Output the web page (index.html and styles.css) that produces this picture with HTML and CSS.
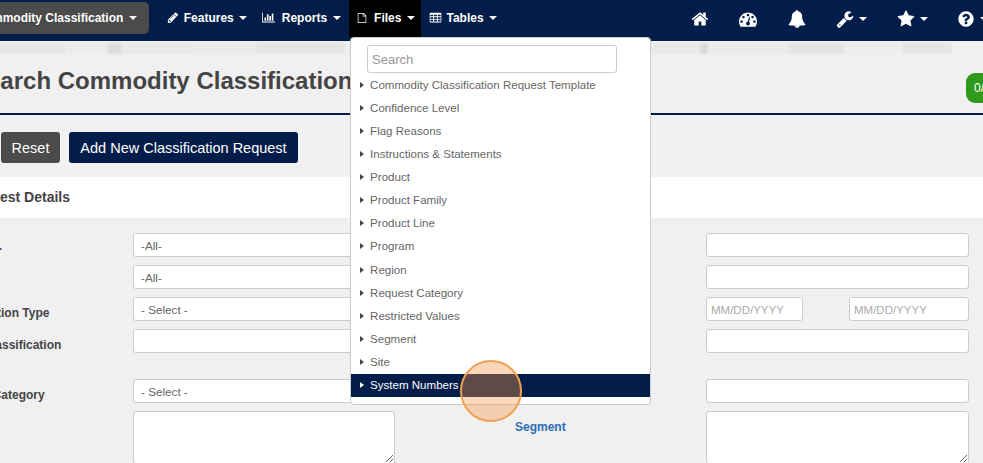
FILE: index.html
```html
<!DOCTYPE html>
<html lang="en">
<head>
<meta charset="utf-8">
<title>Search Commodity Classification</title>
<link rel="stylesheet" href="styles.css">
</head>
<body>
<div class="page">
  <nav class="nav">
    <a class="brand">Commodity Classification <i class="caret"></i></a>
    <a class="item item-features"><svg class="ico i12" viewBox="0 0 1792 1792"><path d="M491 1536l91-91-235-235-91 91v107h128v128h107zm523-928q0-22-22-22-10 0-17 7l-542 542q-7 7-7 17 0 22 22 22 10 0 17-7l542-542q7-7 7-17zm-54-192l416 416-832 832h-416v-416zm683 96q0 53-37 90l-166 166-416-416 166-165q36-38 90-38 53 0 91 38l235 234q37 39 37 91z"/></svg>Features<i class="caret"></i></a>
    <a class="item item-reports"><svg class="ico i13" viewBox="0 0 2048 1792"><path d="M640 896v512h-256v-512h256zm384-512v1024h-256v-1024h256zm1024 1152v128h-2048v-1536h128v1408h1920zm-640-896v768h-256v-768h256zm384-384v1152h-256v-1152h256z"/></svg>Reports<i class="caret"></i></a>
    <div class="item item-open">
      <svg class="ico i10" viewBox="0 0 1792 1792"><path d="M1596 380q28 28 48 76t20 88v1152q0 40-28 68t-68 28h-1344q-40 0-68-28t-28-68v-1600q0-40 28-68t68-28h896q40 0 88 20t76 48zm-444-244v376h376q-10-29-22-41l-313-313q-12-12-41-22zm384 1528v-1024h-416q-40 0-68-28t-28-68v-416h-768v1536h1280z"/></svg>Files<i class="caret"></i>
      <div class="menu">
        <input class="menu-search" placeholder="Search">
        <ul class="menu-list">
          <li>Commodity Classification Request Template</li>
          <li>Confidence Level</li>
          <li>Flag Reasons</li>
          <li>Instructions &amp; Statements</li>
          <li>Product</li>
          <li>Product Family</li>
          <li>Product Line</li>
          <li>Program</li>
          <li>Region</li>
          <li>Request Category</li>
          <li>Restricted Values</li>
          <li>Segment</li>
          <li>Site</li>
          <li class="active">System Numbers</li>
        </ul>
      </div>
    </div>
    <a class="item item-tables"><svg class="ico i13" viewBox="0 0 1792 1792"><path fill-rule="evenodd" d="M160 224h1472q64 0 64 64v1216q0 64-64 64H160q-64 0-64-64V288q0-64 64-64zm32 288v224h384V512zm512 0v224h384V512zm512 0v224h384V512zM192 864v224h384V864zm512 0v224h384V864zm512 0v224h384V864zM192 1216v224h384v-224zm512 0v224h384v-224zm512 0v224h384v-224z"/></svg>Tables<i class="caret"></i></a>
    <div class="nav-right">
      <svg class="nico n-home" viewBox="0 0 1792 1792"><path d="M1472 992v480q0 26-19 45t-45 19h-384v-384h-256v384h-384q-26 0-45-19t-19-45v-480q0-1 .5-3t.5-3l575-474 575 474q1 2 1 6zm223-69l-62 74q-8 9-21 11h-3q-13 0-21-7l-692-577-692 577q-12 8-24 7-13-2-21-11l-62-74q-8-10-7-23.5t11-21.5l719-599q32-26 76-26t76 26l244 204v-195q0-14 9-23t23-9h192q14 0 23 9t9 23v408l219 182q10 8 11 21.5t-7 23.5z"/></svg>
      <svg class="nico n-gauge" viewBox="0 0 1792 1792"><path d="M384 1152q0-53-37.5-90.5t-90.5-37.5-90.5 37.5-37.5 90.5 37.5 90.5 90.5 37.5 90.5-37.5 37.5-90.5zm192-448q0-53-37.5-90.5t-90.5-37.5-90.5 37.5-37.5 90.5 37.5 90.5 90.5 37.5 90.5-37.5 37.5-90.5zm428 481l101-382q6-26-7.5-48.5t-38.5-29.5-48 6.5-30 39.5l-101 382q-60 5-107 43.5t-63 98.5q-20 77 20 146t117 89 146-20 89-117q16-60-6-117t-72-91zm660-33q0-53-37.5-90.5t-90.5-37.5-90.5 37.5-37.5 90.5 37.5 90.5 90.5 37.5 90.5-37.5 37.5-90.5zm-640-640q0-53-37.5-90.5t-90.5-37.5-90.5 37.5-37.5 90.5 37.5 90.5 90.5 37.5 90.5-37.5 37.5-90.5zm448 192q0-53-37.5-90.5t-90.5-37.5-90.5 37.5-37.5 90.5 37.5 90.5 90.5 37.5 90.5-37.5 37.5-90.5zm320 448q0 261-141 483-19 29-54 29h-1402q-35 0-54-29-141-221-141-483 0-182 71-348t191-286 286-191 348-71 348 71 286 191 191 286 71 348z"/></svg>
      <svg class="nico n-bell" viewBox="0 0 1792 1792"><path d="M912 1696q0-16-16-16-59 0-101.5-42.5t-42.5-101.5q0-16-16-16t-16 16q0 73 51.5 124.5t124.5 51.5q16 0 16-16zm816-288q0 52-38 90t-90 38h-448q0 106-75 181t-181 75-181-75-75-181h-448q-52 0-90-38t-38-90q50-42 91-88t85-119.5 74.5-158.5 50-206 19.5-260q0-152 117-282.5t307-158.5q-8-19-8-39 0-40 28-68t68-28 68 28 28 68q0 20-8 39 190 28 307 158.5t117 282.5q0 139 19.5 260t50 206 74.5 158.5 85 119.5 91 88z"/></svg>
      <span class="ngroup n-wrench"><svg class="nico" viewBox="0 0 1792 1792"><path d="M448 1472q0-26-19-45t-45-19-45 19-19 45 19 45 45 19 45-19 19-45zm644-420l-682 682q-37 37-90 37-52 0-91-37l-106-108q-38-36-38-90 0-53 38-91l681-681q39 98 114.5 173.5t173.5 114.5zm634-435q0 39-23 106-47 134-164.5 217.5t-258.5 83.5q-185 0-316.5-131.5t-131.5-316.5 131.5-316.5 316.5-131.5q58 0 121.5 16.5t107.5 46.5q16 11 16 28t-16 28l-293 169v224l193 107q5-3 79-48.5t135.5-81 70.5-35.5q15 0 23.5 10t8.5 25z"/></svg><i class="caret"></i></span>
      <span class="ngroup n-star"><svg class="nico" viewBox="0 0 1792 1792"><path d="M1728 647q0 22-26 48l-363 354 86 500q1 7 1 20 0 21-10.5 35.5t-30.5 14.5q-19 0-40-12l-449-236-449 236q-22 12-40 12-21 0-31.5-14.5t-10.5-35.5q0-6 2-20l86-500-364-354q-25-27-25-48 0-37 56-46l502-73 225-455q19-41 49-41t49 41l225 455 502 73q56 9 56 46z"/></svg><i class="caret"></i></span>
      <span class="ngroup n-help"><svg class="nico" viewBox="0 0 1792 1792"><path d="M1024 1376v-192q0-14-9-23t-23-9h-192q-14 0-23 9t-9 23v192q0 14 9 23t23 9h192q14 0 23-9t9-23zm256-672q0-88-55.5-163t-138.5-116-170-41q-243 0-371 213-15 24 8 42l132 100q7 6 19 6 16 0 25-12 53-68 86-92 34-24 86-24 48 0 85.5 26t37.5 59q0 38-20 61t-68 45q-63 28-115.5 86.5t-52.5 125.5v36q0 14 9 23t23 9h192q14 0 23-9t9-23q0-19 21.5-49.5t54.5-49.5q32-18 49-28.5t46-35 44.5-48 28-60.5 12.5-81zm384 192q0 209-103 385.5t-279.5 279.5-385.5 103-385.5-103-279.5-279.5-103-385.5 103-385.5 279.5-279.5 385.5-103 385.5 103 279.5 279.5 103 385.5z"/></svg><i class="caret"></i></span>
    </div>
  </nav>

  <div class="strip">
    <span class="s1"></span><span class="s2"></span><span class="s3"></span><span class="s4"></span><span class="s5"></span><span class="s6"></span><span class="s7"></span><span class="s8"></span><span class="s9"></span><span class="s10"></span><span class="s11"></span><span class="s12"></span><span class="s13"></span>
  </div>

  <header class="head">
    <h1 class="title">Search Commodity Classification Requests</h1>
    <span class="badge">0/0</span>
  </header>

  <div class="actions">
    <button class="btn btn-reset">Reset</button>
    <button class="btn btn-add">Add New Classification Request</button>
  </div>

  <section class="band"><h2 class="band-title">Request Details</h2></section>

  <form class="form">
    <div class="row">
      <label class="lbl lbl-1">Request No.</label>
      <select class="field"><option>-All-</option></select>
      <span></span><input class="field">
    </div>
    <div class="row">
      <label class="lbl"></label>
      <select class="field"><option>-All-</option></select>
      <span></span><input class="field">
    </div>
    <div class="row">
      <label class="lbl lbl-3">Classification Type</label>
      <select class="field"><option>- Select -</option></select>
      <span></span>
      <div class="dates">
        <input class="field date-a" placeholder="MM/DD/YYYY">
        <input class="field date-b" placeholder="MM/DD/YYYY">
      </div>
    </div>
    <div class="row row-gap">
      <label class="lbl lbl-4">Final Classification</label>
      <input class="field">
      <span></span><input class="field">
    </div>
    <div class="row">
      <label class="lbl lbl-5">Request Category</label>
      <select class="field"><option>- Select -</option></select>
      <span></span><input class="field">
    </div>
    <div class="row row-last">
      <label class="lbl"></label>
      <textarea class="field area"></textarea>
      <span class="seg">Segment</span>
      <textarea class="field area"></textarea>
    </div>
  </form>

  <div class="pointer"></div>
</div>
</body>
</html>
```

FILE: styles.css
```css
* { box-sizing: border-box; }
html, body { margin: 0; height: 463px; overflow: hidden; background: #f0f0f0; }
body { font-family: "Liberation Sans", Arial, sans-serif; color: #444; }

.page { position: relative; width: 1060px; height: 463px; margin-left: -70px; overflow: hidden; }

/* nav */
.nav { display: flex; align-items: flex-start; height: 41px; background: #021d49; color: #fff; font-size: 12px; font-weight: 700; padding-left: 32px; }
.brand { display: flex; align-items: center; height: 32px; margin-top: 2px; padding: 0 12px 0 14px; background: #4b4b4b; border-radius: 5px; white-space: pre; }
.brand .caret { margin-left: 2.5px; }
.item { position: relative; display: flex; align-items: center; height: 35px; padding: 0 8px; white-space: nowrap; }
.item-features { margin-left: 10px; padding-right: 7px; }
.item-reports { padding-right: 9px; }
.item-open { background: #000; height: 37px; padding: 0 7px 2px 8px; }
.ico { fill: #fff; margin-right: 7px; flex: none; height: 13px; }
.i12 { width: 12px; margin-right: 5px; }
.i13 { width: 13px; }
.i10 { width: 10px; height: 14px; margin-right: 7px; }
.item-tables .ico { margin-right: 4px; }
.caret { display: inline-block; width: 0; height: 0; margin-left: 5.5px; margin-right: -0.5px; border-left: 4px solid transparent; border-right: 4px solid transparent; border-top: 4.5px solid #fff; }

.nav-right { display: flex; align-items: center; height: 37px; margin-left: auto; width: 299px; flex: none; }
.nico { fill: #fff; width: 18px; height: 18px; flex: none; }
.ngroup { display: inline-flex; align-items: center; }
.ngroup .caret { margin-left: 5px; }
.n-gauge { margin-left: 30px; }
.n-bell { margin-left: 31px; }
.n-wrench { margin-left: 30px; }
.n-star { margin-left: 30px; }
.n-help { margin-left: 30px; }

/* dropdown */
.menu { position: absolute; left: 1px; top: 37px; z-index: 5; width: 301px; height: 368px; padding-top: 7px; background: #fff; border: 1px solid #ccc; border-radius: 4px; font-weight: 400; }
.menu-search { display: block; width: 250px; height: 28px; margin-left: 16px; padding: 0 4px; border: 1px solid #ccc; border-radius: 3px; font: 13px "Liberation Sans", Arial, sans-serif; color: #555; background: #fff; }
.menu-search::placeholder { color: #999; opacity: 1; }
.menu-list { list-style: none; margin: 0.8px 0 0; padding: 0; }
.menu-list li { position: relative; height: 23.1px; padding-left: 19px; line-height: 23px; font-size: 11.55px; color: #666; white-space: nowrap; }
.menu-list li::before { content: ""; position: absolute; left: 9px; top: 8px; border-top: 3.5px solid transparent; border-bottom: 3.5px solid transparent; border-left: 4px solid #444; }
.menu-list .active { background: #021d49; color: #fff; }
.menu-list .active::before { border-left-color: #fff; }

/* strip */
.strip { display: flex; gap: 1px; height: 14px; padding: 2px 0 0 70px; background: #f1f1f1; overflow: hidden; }
.strip span { display: block; height: 11px; background: #e9e9e9; filter: blur(1px); flex: none; }
.s1 { width: 66px; background: #e6e6e6 !important; } .s2 { width: 40px; background: #ececec !important; } .s3 { width: 14px; background: #dcdcdc !important; } .s4 { width: 70px; } .s5 { width: 60px; background: #eaeaea !important; } .s6 { width: 90px; background: #e5e5e5 !important; }
.s7 { width: 304px; background: #eeeeee !important; }
.s8 { width: 48px; background: #e9e9e9 !important; } .s9 { width: 8px; background: #d9d9d9 !important; } .s10 { width: 78px; background: #ebebeb !important; } .s11 { width: 56px; background: #e4e4e4 !important; } .s12 { width: 56px; background: #ededed !important; } .s13 { width: 50px; background: #e5e5e5 !important; }

/* header */
.head { position: relative; height: 60px; background: #f0f0f1; border-bottom: 2px solid #021d49; padding: 12px 0 0 41px; }
.title { margin: 0; font-size: 24px; line-height: 28px; font-weight: 700; color: #444; white-space: nowrap; }
.badge { position: absolute; left: 1036px; top: 18px; width: 40px; height: 30px; padding-left: 8px; line-height: 30px; font-size: 12px; color: #fff; background: #2f9a1c; border-radius: 9px; }

/* actions */
.actions { display: flex; gap: 9px; height: 62px; padding: 17px 0 0 71px; background: #f1f1f1; }
.btn { height: 31px; border: 0; border-radius: 3px; color: #fff; font: 14.5px "Liberation Sans", Arial, sans-serif; padding: 0; }
.btn-reset { width: 59px; background: #4b4b4b; }
.btn-add { width: 229px; background: #021d49; }

/* band */
.band { height: 41px; background: #fff; padding: 0 0 0 35px; }
.band-title { margin: 0; font-size: 14px; line-height: 40px; font-weight: 700; color: #444; }

/* form */
.form { padding-top: 15px; background: #f0f0f0; }
.row { display: grid; grid-template-columns: 203px 262px 311px 263px; height: 24px; margin-bottom: 8px; }
.row-gap { margin-bottom: 26px; }
.row-last { height: 53px; margin-bottom: 0; }
.lbl { padding: 9px 0 0 2px; font-size: 12px; line-height: 14px; font-weight: 700; color: #444; white-space: nowrap; }
.lbl-1 { padding-top: 6px; }
.lbl-3 { padding-left: 11px; }
.lbl-4 { padding-left: 22px; }
.lbl-5 { padding-left: 12px; }
.field { display: block; width: 100%; height: 24px; margin: 0; padding: 1px 7px 0; appearance: none; background: #fff; border: 1px solid #ccc; border-radius: 3px; font: 11.7px "Liberation Sans", Arial, sans-serif; color: #666; }
.field::placeholder { color: #aaa; opacity: 1; }
.area { height: 53px; padding: 0 7px; }
.dates { display: flex; justify-content: space-between; }
.date-a { width: 97px; padding: 2px 4px 0; font-size: 11.5px; }
.date-b { width: 120px; padding: 2px 4px 0; font-size: 11.5px; }
.seg { padding: 9px 0 0 120px; font-size: 12px; line-height: 14px; font-weight: 700; color: #2a6db5; }

/* click marker */
.pointer { position: absolute; left: 530px; top: 360px; z-index: 9; width: 62px; height: 62px; border-radius: 50%; background: rgba(245, 150, 70, 0.38); border: 2px solid #f0a050; }
```
